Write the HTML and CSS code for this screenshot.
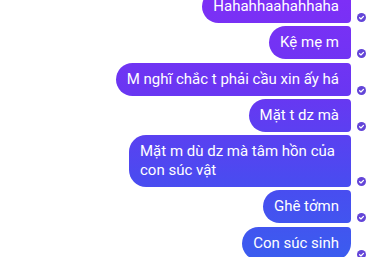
FILE: index.html
```html
<!DOCTYPE html>
<html>
<head>
<meta charset="utf-8">
<link rel="stylesheet" href="styles.css">
</head>
<body>
<div class="thread">
  <div class="row"><div class="bubble">Hahahhaahahhaha</div><svg class="seen" viewBox="0 0 10 10"><circle cx="5" cy="5" r="5"/><path d="M2.9 5.2 L4.4 6.6 L7.2 3.7"/></svg></div>
  <div class="row"><div class="bubble">Kệ mẹ m</div><svg class="seen" viewBox="0 0 10 10"><circle cx="5" cy="5" r="5"/><path d="M2.9 5.2 L4.4 6.6 L7.2 3.7"/></svg></div>
  <div class="row"><div class="bubble">M nghĩ chắc t phải cầu xin ấy há</div><svg class="seen" viewBox="0 0 10 10"><circle cx="5" cy="5" r="5"/><path d="M2.9 5.2 L4.4 6.6 L7.2 3.7"/></svg></div>
  <div class="row"><div class="bubble">Mặt t dz mà</div><svg class="seen" viewBox="0 0 10 10"><circle cx="5" cy="5" r="5"/><path d="M2.9 5.2 L4.4 6.6 L7.2 3.7"/></svg></div>
  <div class="row"><div class="bubble wide">Mặt m dù dz mà tâm hồn của con súc vật</div><svg class="seen" viewBox="0 0 10 10"><circle cx="5" cy="5" r="5"/><path d="M2.9 5.2 L4.4 6.6 L7.2 3.7"/></svg></div>
  <div class="row"><div class="bubble">Ghê tởmn</div><svg class="seen" viewBox="0 0 10 10"><circle cx="5" cy="5" r="5"/><path d="M2.9 5.2 L4.4 6.6 L7.2 3.7"/></svg></div>
  <div class="row"><div class="bubble last">Con súc sinh</div><svg class="seen" viewBox="0 0 10 10"><circle cx="5" cy="5" r="5"/><path d="M2.9 5.2 L4.4 6.6 L7.2 3.7"/></svg></div>
</div>
</body>
</html>
```
FILE: styles.css
```css
html, body {
  margin: 0;
  padding: 0;
  background: #ffffff;
  overflow: hidden;
  height: 257px;
}
.thread {
  display: flex;
  flex-direction: column;
  gap: 3.3px;
  margin-top: -10px;
  padding-right: 8px;
  font-family: Roboto, "Noto Sans", sans-serif;
}
.row {
  display: flex;
  justify-content: flex-end;
  align-items: flex-end;
  gap: 6px;
}
.bubble {
  color: #ffffff;
  font-size: 15px;
  line-height: 19px;
  padding: 7px 12px 7px 11px;
  border-radius: 17px 4px 4px 17px;
  background: linear-gradient(180deg, #7d2ff6 0px, #6a36f2 90px, #4a4bf0 180px, #3b5cef 257px);
  background-attachment: fixed;
}
.bubble.wide {
  max-width: 198px;
  padding-right: 13px;
}
.bubble.last {
  border-bottom-right-radius: 17px;
}
.seen {
  width: 9px;
  height: 9px;
  flex: none;
  margin-bottom: 1px;
}
.seen circle {
  fill: #6345d8;
}
.seen path {
  fill: none;
  stroke: #ffffff;
  stroke-width: 1.4;
  stroke-linecap: round;
  stroke-linejoin: round;
}
```
